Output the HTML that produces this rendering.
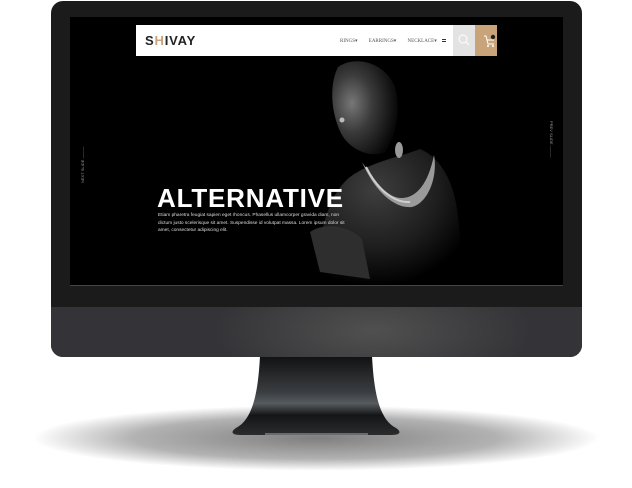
<!DOCTYPE html>
<html><head><meta charset="utf-8"><style>
*{margin:0;padding:0;box-sizing:border-box}
body{width:632px;height:488px;background:#fff;position:relative;overflow:hidden;font-family:"Liberation Sans",sans-serif}
.abs{position:absolute}
</style></head><body>
<div class="abs" style="left:30px;top:405px;width:572px;height:66px;border-radius:50%;background:radial-gradient(ellipse at center,rgba(0,0,0,0.5) 0%,rgba(0,0,0,0.3) 45%,rgba(0,0,0,0) 70%)"></div>
<svg class="abs" style="left:0;top:0" width="632" height="488">
<defs>
<linearGradient id="st" x1="0" y1="0" x2="0" y2="1">
<stop offset="0" stop-color="#111"/><stop offset="0.45" stop-color="#3a3d40"/><stop offset="0.6" stop-color="#575b5e"/><stop offset="0.75" stop-color="#141516"/><stop offset="1" stop-color="#2a2c2e"/>
</linearGradient>
<radialGradient id="skin" cx="0.3" cy="0.45" r="0.7"><stop offset="0" stop-color="#777"/><stop offset="0.45" stop-color="#3a3a3a"/><stop offset="1" stop-color="#080808"/></radialGradient>
<radialGradient id="back" cx="0.4" cy="0.3" r="0.7"><stop offset="0" stop-color="#3e3e3e"/><stop offset="0.6" stop-color="#1e1e1e"/><stop offset="1" stop-color="#000"/></radialGradient>
</defs>
<path d="M260 356 L372 356 C374 395 380 420 396 428 C402 432 400 435 392 435 L240 435 C232 435 230 432 236 428 C252 420 258 395 260 356Z" fill="url(#st)"/>
<path d="M265 434 L368 434" stroke="#aaa" stroke-width="1"/>
</svg>
<div class="abs" style="left:51px;top:1px;width:531px;height:356px;border-radius:12px;background:#1b1b1b;overflow:hidden">
  <div class="abs" style="left:0;top:306px;width:531px;height:50px;background:radial-gradient(ellipse 160px 60px at 322px 24px,#505050 0%,#3f3f41 60%,#343438 100%)"></div>
</div>
<div class="abs" style="left:70px;top:17px;width:493px;height:269px;background:#000;overflow:hidden;border-bottom:1px solid #444">
  <svg class="abs" style="left:0;top:0" width="493" height="269">
    <path d="M245 269 C248 225 255 180 280 160 C300 145 330 140 350 132 C370 140 385 165 388 200 C392 235 392 255 395 269Z" fill="url(#back)"/>
    <path d="M268 50 C285 38 315 45 325 70 C332 95 325 120 315 135 C300 142 280 132 272 118 C262 100 258 70 268 50Z" fill="url(#skin)"/>
    <path d="M240 215 C255 205 278 208 292 222 L300 262 L250 255 Z" fill="#2e2e2e"/>
    <path d="M292 145 C305 175 325 192 342 190 C358 186 368 160 364 138 C358 168 346 180 333 181 C318 182 305 165 292 145Z" fill="#9a9a9a"/>
    <path d="M296 150 C308 174 325 186 340 185" stroke="#cfcfcf" stroke-width="2" fill="none"/>
    <ellipse cx="329" cy="133" rx="4" ry="8" fill="#999"/>
    <circle cx="272" cy="103" r="2.5" fill="#bbb"/>
  </svg>
  <div class="abs" style="left:66px;top:8px;width:361px;height:31px;background:#fff"></div>
  <div class="abs" style="left:75px;top:16px;font-size:13px;font-weight:bold;color:#222;letter-spacing:0.8px">S<span style="color:#c9a47a">H</span>IVAY</div>
  <div class="abs" style="left:270px;top:21px;font-family:'Liberation Serif',serif;font-size:5px;color:#555;word-spacing:10px;white-space:nowrap">RINGS▾ EARRINGS▾ NECKLACE▾</div>
  <div class="abs" style="left:372px;top:22px;width:4px;height:1px;background:#333;box-shadow:0 2px 0 #333"></div>
  <div class="abs" style="left:383px;top:8px;width:22px;height:31px;background:#e3e3e3"></div>
  <div class="abs" style="left:405px;top:8px;width:22px;height:31px;background:#c9a47a"></div>
  <svg class="abs" style="left:383px;top:8px" width="44" height="31">
    <circle cx="10" cy="14" r="4" stroke="#fff" stroke-width="1" fill="none"/><path d="M13 17 L16 20" stroke="#fff" stroke-width="1"/>
    <path d="M31 11 L33 11 L35 19 L41 19 M34 15 L41 15" stroke="#fff" stroke-width="1" fill="none"/><circle cx="35" cy="21" r="1" fill="#fff"/><circle cx="40" cy="21" r="1" fill="#fff"/>
    <circle cx="40" cy="12" r="2.2" fill="#222"/>
  </svg>
  <div class="abs" style="left:87px;top:166px;font-size:26px;font-weight:bold;color:#fff;letter-spacing:0.8px">ALTERNATIVE</div>
  <div class="abs" style="left:88px;top:195px;width:190px;font-size:4.8px;line-height:7.5px;color:#ddd">Etiam pharetra feugiat sapien eget rhoncus. Phasellus ullamcorper gravida diam, non dictum justo scelerisque sit amet. Suspendisse id volutpat massa. Lorem ipsum dolor sit amet, consectetur adipiscing elit.</div>
  <div class="abs" style="left:10px;top:166px;font-size:4px;color:#999;transform:rotate(-90deg);transform-origin:left top;white-space:nowrap">NEXT SLIDE ———</div>
  <div class="abs" style="left:484px;top:104px;font-size:4px;color:#999;transform:rotate(90deg);transform-origin:left top;white-space:nowrap">PREV SLIDE ———</div>
</div>
</body></html>
